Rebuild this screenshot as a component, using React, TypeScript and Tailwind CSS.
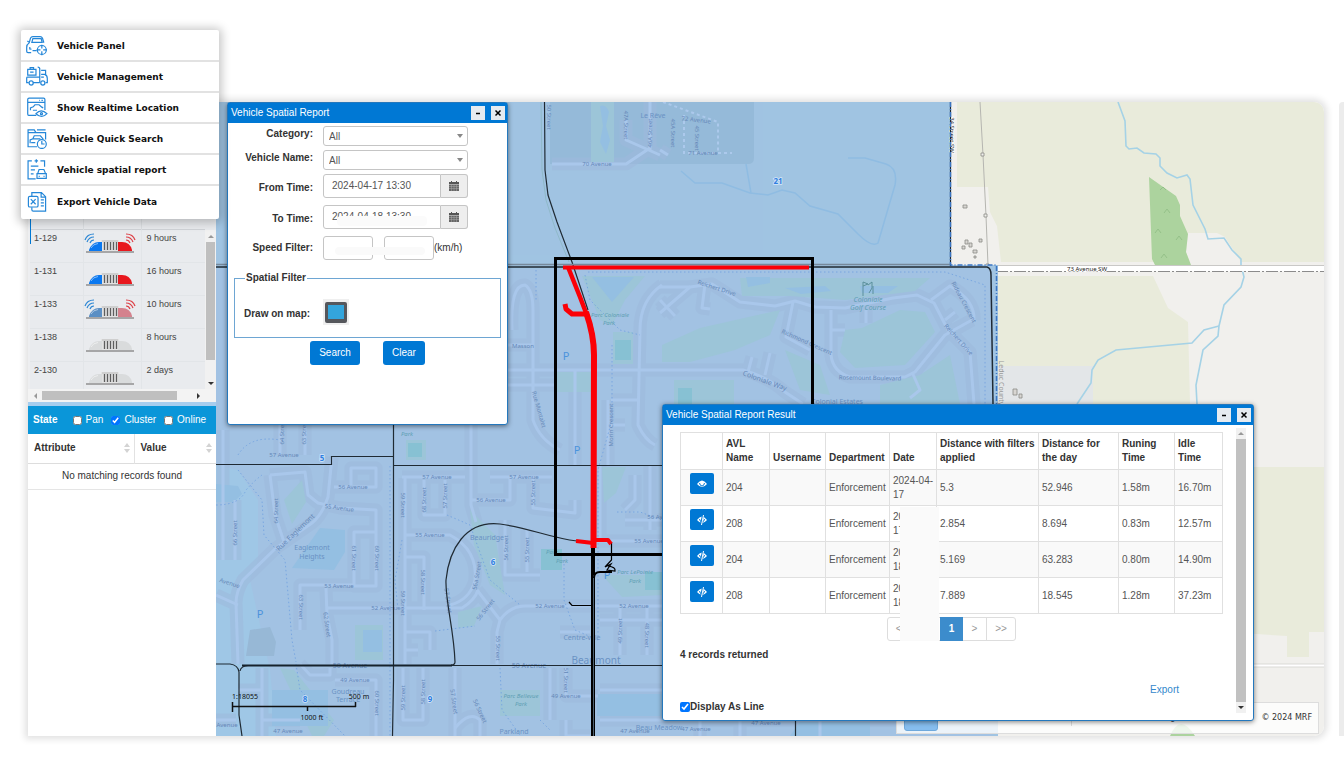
import { Fragment, type ReactNode } from "react";

const menuItems = [
  {
    label: "Vehicle Panel",
    icon: (
      <>
        <path d="M9 23l4-14q2-5 7-5h21q5 0 7 5l4 13M17 21l3-11h24l3 11zM9 23q-7 4-7 13v11q0 4 4 4h9M4 17l4 3" />
        <path d="M19 45h12M11 34v6l5 1" />
        <circle cx="46" cy="43" r="13" />
        <path d="M46 28v11M46 47v11M31 43h11M50 43h11" />
      </>
    ),
  },
  {
    label: "Vehicle Management",
    icon: (
      <>
        <path d="M5 9h24v17H5zM12 9V4h10v5M12 17h10M2 32h38M2 32v16h6M20 48h20M40 6v42M34 3q6 0 6 6" />
        <path d="M44 12h13v12H44M44 24h10q8 2 8 12v12h-5M44 32h8" />
        <circle cx="15" cy="49" r="6" />
        <circle cx="49" cy="49" r="6" />
      </>
    ),
  },
  {
    label: "Show Realtime Location",
    icon: (
      <>
        <path d="M30 53H8q-3 0-3-4V7q0-4 4-4h42q4 0 4 4v30M5 15h50M38 9h2M45 9h4" />
        <path d="M13 38v-7l8-3 5-6h12l8 7 4 2M20 38h12" />
        <path d="M29 48q15-16 32 0q-15 16-32 0z" />
        <circle cx="45" cy="48" r="3" />
      </>
    ),
  },
  {
    label: "Vehicle Quick Search",
    icon: (
      <>
        <path d="M32 54H6V5h18l5 8h28v20M32 5h25M6 13h23" />
        <path d="M12 44V34l8-3 4-9h18l8 10M20 31h22M15 42h12" />
        <circle cx="46" cy="46" r="13" />
        <path d="M46 37v9h8" />
      </>
    ),
  },
  {
    label: "Vehicle spatial report",
    icon: (
      <>
        <path d="M17 5H6v52h22M42 5h12v17M25 5h10M30 0v10M14 20h22M14 31h12M14 43h8" />
        <path d="M34 42l4-12h14l5 12M32 42h27v14H32zM37 50h3M51 50h3" />
      </>
    ),
  },
  {
    label: "Export Vehicle Data",
    icon: (
      <>
        <path d="M17 14V4h28l12 12v42H21q-4 0-4-4v-7M44 4v13h13M43 25h9M43 34h9M43 43h9" />
        <rect x="7" y="15" width="28" height="31" rx="4" />
        <path d="M14 23l14 15M28 23L14 38" />
      </>
    ),
  },
];

const units = [
  { name: "1-129", time: "9 hours", left: "#0a78f0", right: "#e8171d", waves: true },
  { name: "1-131", time: "16 hours", left: "#0a78f0", right: "#e8171d", waves: false },
  { name: "1-133", time: "10 hours", left: "#5b8fc4", right: "#d4828d", waves: true },
  { name: "1-138", time: "8 hours", left: "#d9dbdc", right: "#d9dbdc", waves: false },
  { name: "2-130", time: "2 days", left: "#d9dbdc", right: "#d9dbdc", waves: false },
];

const results = [
  { name: "204", date: ["2024-04-", "17"], filtered: "5.3", day: "52.946", run: "1.58m", idle: "16.70m", shown: true },
  { name: "208", date: ["2024-04-", "17"], filtered: "2.854", day: "8.694", run: "0.83m", idle: "12.57m", shown: false },
  { name: "204", date: ["2024-04-", "18"], filtered: "5.169", day: "63.283", run: "0.80m", idle: "14.90m", shown: false },
  { name: "208", date: ["2024-04-", "18"], filtered: "7.889", day: "18.545", run: "1.28m", idle: "37.23m", shown: false },
];

const columns = [
  ["w-[42px]", "", ""],
  ["w-[47px]", "AVL", "Name"],
  ["w-[56px]", "", "Username"],
  ["w-[64px]", "", "Department"],
  ["w-[47px]", "", "Date"],
  ["w-[102px]", "Distance with filters", "applied"],
  ["w-[80px]", "Distance for", "the day"],
  ["w-[56px]", "Runing", "Time"],
  ["w-[48px]", "Idle", "Time"],
];

const roads = [
  "M332 457L328 497Q322 515 312 523L276 548L243 580Q236 592 236 603L238 664",
  "M334 487H376V468H351V485",
  "M270 475L305 472L308 495L318 503L340 508L376 510V586H354V532H376",
  "M300 630V585H354",
  "M326 588L327 615L332 640V664",
  "M327 608H462Q475 600 478 590",
  "M270 475L275 515L285 545",
  "M402 477H465M471 425V505L476 522",
  "M405 478V664",
  "M424 480V515H445V480",
  "M490 477H552M533 477V508L575 513V500",
  "M472 500H510V477",
  "M404 535H450Q478 550 475 580Q470 600 450 605",
  "M405 557H424V610",
  "M405 632H430V650M405 650H418",
  "M505 520V575H540M527 530V572",
  "M477 590L500 620L497 632V664M500 620Q510 606 525 606H662",
  "M598 541H662",
  "M620 608V655M647 608V655",
  "M300 664L310 675H330V668",
  "M335 680H376V736M403 668V720H423V668M455 668V736M262 668V736M238 690H262",
  "M455 728Q470 710 480 720V736",
  "M550 668V720M566 668V696H598M566 720V736H590",
  "M508 370H743Q770 378 785 392L803 404",
  "M508 385H555M575 370V465",
  "M512 330Q510 285 525 285Q533 290 533 310V420Q540 440 560 450",
  "M508 345H533",
  "M662 285Q640 300 640 330L638 425Q645 440 655 445",
  "M608 400V465M611 400H640M611 425H625",
  "M660 313L690 287L712 284L740 302L775 306L795 301L815 307L845 308L893 298L917 295L934 303L948 330L970 352L974 404",
  "M705 284L702 308L710 309",
  "M660 287H690M660 300L675 316",
  "M793 302L786 337L810 350M770 353L765 375M748 372L752 357",
  "M831 310V355Q833 372 850 377H905L915 372L945 335L972 320",
  "M931 300L950 286Q975 300 974 320M945 320L955 312",
  "M866 310V323M831 330H845M912 372L920 390L910 398",
  "M626 120V140L660 155M650 102V150M660 150L668 155",
  "M552 164H626L650 148",
  "M223 430V560M235 500V560",
  "M216 595L238 605M280 425V455M305 425V455",
  "M216 720H236M262 720H300",
  "M600 465V540M635 475V500L625 510M650 465V530M662 520H625",
  "M560 632H590M600 620H662M600 690H662M600 720H900M700 720V736M740 720V736M820 720V736",
];

const parks = [
  "M591 102h23v60h-23z",
  "M662 345L700 328L780 310L770 335L735 350L690 362H662z",
  "M740 278H930L915 291L845 300L790 296L742 296z",
  "M845 330L862 328L900 310L925 312L935 332L905 365L855 368L840 352z",
  "M582 276H645L625 300L612 325L600 320z",
  "M613 332h20v32h-20z",
  "M406 440h20v20h-20z",
  "M284 500l18 -20l4 22l-14 22z",
  "M355 625h28v35h-28z",
  "M602 467h24l-10 26l-12 10z",
  "M602 575h60v20l-40 2z",
  "M470 510l25 25l10 60l-15 -10l-16 -40z",
  "M458 612l24 -6l-8 20l-16 2z",
  "M555 372h40v20h-40z",
  "M500 690h40v26h-40zM280 668l14 2l40 50l-10 16h-12z",
  "M785 350l35 15l10 30l-30 -5zM880 385l40 -10l30 -20l10 49h-80z",
  "M674 380h60v24h-60z",
];

const ponds = [
  "M592 277H634L612 302z",
  "M746 277l24 0l0 6l-22 4zM785 288l40 -2l6 5l-30 3zM860 286l38 0l-10 7h-26z",
  "M292 568L320 528L345 530V552L334 570z",
  "M363 630h19v22h-19z",
  "M216 484l22 2l4 8l-8 8h-18z",
  "M600 106q6 -2 9 6l-3 14l4 14l-4 14l-6 -12l3 -16z",
  "M272 690h56v36h-56zM597 694h65v22h-65z",
  "M800 722h70v14h-80z",
];

const teal = ["M615 340h16v20h-16z", "M408 443h14v14h-14z", "M541 549h21v21h-21z", "M645 572h17v18h-17z", "M678 388h14v16h-14z"];

const trails = [
  "M588 272H945L985 285V404",
  "M390 466V736M536 270V300",
  "M612 345V420L598 470V640",
  "M238 470L262 500L264 535L285 560L292 640L296 662",
  "M447 515L470 525L490 580L520 605",
  "M402 540L395 580L398 610M435 631L475 626",
  "M585 275L590 300L620 330L640 335",
  "M216 505Q240 505 246 490Q255 480 262 475",
  "M564 560V600L575 630L598 640",
  "M500 668L502 710L520 735M540 720L550 730",
  "M238 455Q250 435 280 440",
  "M617 512H640L662 520",
  "M296 664L300 690L345 736",
];

// text, x, y, rotation, size
type Label = [string, number, number, number?, number?];

const streetLabels: Label[] = [
  ["57 Avenue", 284, 457], ["56 Avenue", 353, 489], ["55 Avenue", 339, 510, 8], ["Rue Eaglemont", 297, 534, -44, 7],
  ["Avenue", 229, 585, 18], ["53 Avenue", 339, 588], ["52 Avenue", 386, 610], ["57 Avenue", 437, 479],
  ["57 Avenue", 524, 479], ["56 Avenue", 491, 502], ["55 Avenue", 430, 537], ["55 Avenue", 649, 543],
  ["56 Avenue", 662, 519], ["52 Avenue", 550, 608], ["52 Avenue", 634, 608], ["50 Avenue", 350, 668, 0, 7],
  ["50 Avenue", 529, 668, 0, 7], ["49 Avenue", 355, 682], ["49 Avenue", 566, 698], ["47 Avenue", 288, 733],
  ["47 Avenue", 635, 733], ["47 Avenue", 696, 731], ["47 Avenue", 766, 725], ["Avenue", 227, 727],
  ["68 Street", 426, 500, -90], ["57 Street", 447, 496, -90], ["59 Street", 401, 505, 90], ["66 Street", 237, 533, -90],
  ["64 Street", 278, 511, -90], ["61 Street", 352, 558, 90], ["60 Street", 375, 558, 90], ["58 Street", 421, 582, 90],
  ["56 Street", 508, 548, -90], ["55 Street", 529, 550, -90], ["55 Street", 535, 493, -90], ["56a Street", 479, 576, -80],
  ["57 Street", 446, 601, 82], ["56 Street", 487, 611, -52], ["63 Street", 299, 607, 90], ["62 Street", 325, 625, 82],
  ["59 Street", 401, 603, 90], ["55 Street", 496, 648, 90], ["49 Street", 622, 631, -90], ["48 Street", 645, 635, 90],
  ["60 Street", 375, 703, 90], ["59 Street", 405, 698, -90], ["58 Street", 425, 692, -90], ["57 Street", 452, 702, 82],
  ["51 Street", 564, 680, 90], ["56 Street", 478, 712, 65], ["64 Street", 284, 432, -90], ["63 Street", 306, 432, -90],
  ["50 Street", 547, 117, 90], ["70 Avenue", 597, 166], ["47A Street", 624, 125, 90], ["46A Street", 652, 133, -90],
  ["72 Avenue", 696, 122, 6], ["71 Avenue", 703, 155], ["45A Street", 671, 133, 90], ["45 Street", 695, 138, 90],
  ["Masson", 523, 348], ["Rue Montalet", 537, 410, 74], ["Morin Crescent", 613, 425, -90],
  ["Reichert Drive", 716, 290, 18], ["Richmond Crescent", 806, 344, 24], ["Coloniale Way", 764, 383, 20, 7],
  ["Rosemount Boulevard", 870, 380, 1], ["Rideau Crescent", 962, 303, 62], ["Reichert Drive", 957, 341, 48],
];

const placeLabels: Label[] = [
  ["Eaglemont", 312, 550, 0, 7], ["Heights", 312, 559, 0, 7], ["Beauridge", 487, 540, 0, 7], ["Centre-ville", 582, 640, 0, 7],
  ["Beaumont", 596, 664, 0, 10], ["Goudreau", 348, 694, 0, 7], ["Terrace", 348, 702, 0, 7], ["Parkland", 514, 734, 0, 7],
  ["Beau Meadow", 659, 730, 0, 7], ["Le Rêve", 653, 118, 0, 7], ["Colonial Estates", 837, 404, 0, 7],
];

const parkLabels: Label[] = [
  ["Coloniale", 868, 302, 0, 7], ["Golf Course", 868, 310, 0, 7], ["Parc Coloniale", 610, 317], ["Park", 609, 325],
  ["Parc LePointe", 635, 574], ["Park", 635, 583], ["Parc Bellevue", 521, 698], ["Park", 521, 706], ["Park", 407, 436],
  ["Parc", 552, 554], ["Park", 562, 563],
];

const zoneLabels: Label[] = [["21", 778, 184], ["5", 322, 461], ["6", 493, 565], ["8", 305, 702], ["9", 430, 702]];
const parking: Label[] = [["P", 566, 360], ["P", 577, 454], ["P", 607, 579], ["P", 260, 618]];

function Labels({ items, size = 6 }: { items: Label[]; size?: number }) {
  return (
    <>
      {items.map(([text, x, y, rot = 0, s], i) => (
        <text key={i} x={x} y={y} fontSize={s ?? size} textAnchor="middle" transform={`rotate(${rot} ${x} ${y})`}>
          {text}
        </text>
      ))}
    </>
  );
}

function CityMap() {
  return (
    <svg
      viewBox="216 102 1108 634"
      preserveAspectRatio="xMinYMin slice"
      className="block h-full w-full font-['Noto_Sans',sans-serif]"
    >
      <rect x="216" y="102" width="1108" height="634" fill="#f1f0ed" />

      {/* farmland east of town */}
      <g fill="#e9ebdb">
        <path d="M957 102H1324V262H1241L1225 237L1217 233H1188L1186 252L1190 262H1001L997 226L990 212L988 187H957z" />
        <path d="M998 276H1153L1168 308L1188 322L1190 404H998z" />
        <path d="M1240 467H1324V632H1309V657H1287V636L1240 633z" />
      </g>
      <path d="M998 366H1093V404H998z" fill="#e3e6e8" />
      <path d="M1149 177L1176 196L1180 205V216L1188 234L1186 252L1191 265H1155L1152 259z" fill="#acd39e" />
      <path d="M1170 736q10 -24 25 0z" fill="#acd39e" />
      <g fill="none" stroke="#94c089" strokeWidth="1">
        <path d="M1164 213l3-4l3 4M1155 233l3-4l3 4M1176 240l3-4l3 4M1161 258l3-4l3 4M1160 190l3-3l3 3" />
      </g>
      <g fill="none" stroke="#a5d2e6" strokeWidth="1.6">
        <path d="M1118 102L1125 121L1126 146L1129 149L1137 148L1144 153L1156 154L1160 158V166L1167 173L1177 178L1187 175L1190 179L1193 205L1205 229L1208 239L1224 238L1232 250L1241 259V265L1244 277L1241 287L1224 305L1219 326L1218 336L1203 350L1196 385L1197 404" />
        <path d="M1219 326L1204 330L1192 343L1116 350L1098 360L1092 370L1091 383L1077 404" />
      </g>
      <path d="M950 268.500H1324" stroke="#fff" strokeWidth="6" />
      <path d="M950 265.500H1324" stroke="#c9c8c6" />
      <path d="M996 271.500H1324" stroke="#8b8b8b" strokeDasharray="12 2 2 2" />
      <path d="M1240 665.500H1324" stroke="#dad9d6" strokeWidth="4" />
      <path d="M1240 665.500H1324" stroke="#fff" strokeWidth="2" />
      <path d="M980 102L983 155L986 216L988 265" fill="none" stroke="#b5b5b0" />
      <g fill="#f1f0ed" stroke="#8a8a86" strokeWidth="0.8">
        <path d="M981 153h3v3h-3zM984 214h3v3h-3zM986 264h3v3h-3z" />
        <path d="M963 205h4v3h-4zM965 240h3v4h-3zM969 243h3v4h-3zM979 239h3v3h-3zM973 250h4v3h-4zM962 246h3v3h-3zM974 256h2v2h-2zM1013 389h4v6h-4zM1019 394h3v4h-3z" fill="#d8d6d2" />
      </g>

      {/* town */}
      <path d="M216 102H950V265H998V736H216z" fill="#a0c4e2" />
      <path d="M508 269H992V736H216V269z" fill="#a2c2e3" />
      <path d="M216 465l22 5l20 30v60l-8 20l20 90l6 66h-60z" fill="#9fc7e6" />
      <path d="M550 102H754V158Q754 164 748 164H550z" fill="#96bad9" />
      <g fill="none" stroke="#9eb9dc" strokeWidth="13" strokeLinejoin="round" opacity="0.55">
        {roads.map((d) => (
          <path key={d} d={d} />
        ))}
      </g>
      <g fill="#9cc5d8">
        {parks.map((d) => (
          <path key={d} d={d} />
        ))}
      </g>
      <g fill="#94bfe2">
        {ponds.map((d) => (
          <path key={d} d={d} />
        ))}
      </g>
      <g fill="#87c1d3">
        {teal.map((d) => (
          <path key={d} d={d} />
        ))}
      </g>
      <path d="M250 630l20-3l6 15l-2 14h-28z" fill="#97b8d6" />
      <g fill="none" stroke="#a9c7eb" strokeWidth="3" strokeLinejoin="round">
        {roads.map((d) => (
          <path key={d} d={d} />
        ))}
      </g>
      <g fill="none" stroke="#6f9fe0" strokeWidth="0.8" strokeDasharray="1.500 2.500">
        {trails.map((d) => (
          <path key={d} d={d} />
        ))}
      </g>
      <path d="M663 102L718 122V153M684 115V153H732" fill="none" stroke="#acc9ec" strokeWidth="2" strokeDasharray="3 3" />
      <g fill="none" stroke="#8fbce2" strokeWidth="1.500">
        <path d="M681 171L695 183L722 183L750 193L768 195L782 190L795 193L810 206L838 214L858 234Q872 248 878 243L895 185Q898 168 886 164L865 158L848 158" />
        <path d="M746 164L751 193" />
      </g>
      <g fill="none" stroke="#5a8f9c">
        <path d="M863 296v-14l5 2l-5 2M868 285l4-3v6l-3 5M873 286v8" />
      </g>

      <g fill="#6588b8">
        <Labels items={streetLabels} />
      </g>
      <g fill="#6a92c4">
        <Labels items={placeLabels} />
      </g>
      <g fill="#609fb4" fontStyle="italic">
        <Labels items={parkLabels} />
      </g>
      <g fill="#4c93dc">
        <Labels items={parking} size={11} />
      </g>
      <g fill="#2f7fe0" stroke="#d5e6fa" strokeWidth="1.500" paintOrder="stroke" fontWeight="bold">
        <Labels items={zoneLabels} size={8} />
      </g>
      <g fill="#222" stroke="#fff" strokeWidth="1.500" paintOrder="stroke">
        <Labels items={[["73 Avenue SW", 1087, 271, 0, 6], ["34 Street SW", 950, 135, 90, 6]]} />
      </g>
      <g fill="#999">
        <Labels items={[["Leduc County", 999, 383, 90, 7]]} />
      </g>

      {/* zone boundaries */}
      <g fill="none" stroke="#1f2a33" strokeWidth="1.200">
        <path d="M216 464.500H331.500V456.500H393" />
        <path d="M393.500 425V680L392.500 736M393 465.500H662" />
        <path d="M216 664H230Q238 665 239 672V715L242 736M240 671Q241 666 248 665.500H998" />
        <path d="M950.500 102V266" />
        <path d="M216 267H950M950 267H987Q991 268 991 275L993 404" strokeWidth="1.500" />
        <path d="M544.500 102L545 170L548 195L557 222L572 262L588 310" />
        <path d="M577 541C550 538 530 528 500 524C465 520 449 550 446 580C445 600 454 630 455 662Q455 665 451 665" />
        <path d="M795.500 720V736" />
      </g>
      <path d="M216 264.500H950" stroke="#76899b" strokeWidth="1.500" />
      <path d="M541 102L542 170L546 200L555 228L569 262" fill="none" stroke="#8fb9c9" strokeWidth="1" />
      <path d="M950.500 102V265H996.500V404" fill="none" stroke="#3b75c4" strokeWidth="1.500" strokeDasharray="5 2 1 2" />
      <path d="M242 665.500H452" stroke="#16222c" strokeWidth="2" />
      <g fill="none" stroke="#000">
        <path d="M593 545V736" strokeWidth="4" />
        <path d="M593.500 575V736" stroke="#62788c" strokeWidth="0.800" />
        <path d="M594 578Q594 572 600 572H612" strokeWidth="2" />
        <path d="M611.500 542V560L605 567L611 564L607 570L615 571Q616 567 608 566M593 605.500H572L569 602" strokeWidth="1.200" />
        <path d="M662 554.500H555.500V258.500H812.500V404" strokeWidth="3" />
      </g>
      <g fill="none" stroke="#fb0007" strokeLinejoin="round">
        <path d="M563 267.500H809" strokeWidth="4" />
        <path d="M568 267L580 297L588 318Q594 335 594 355" strokeWidth="4.500" />
        <path d="M586 312Q594 335 594 355L593.500 548" strokeWidth="6" />
        <path d="M565 304L566 309L572 314L588 314" strokeWidth="5" />
        <path d="M576 541L593 543M593 540H608L611 544" strokeWidth="4" />
      </g>

      {/* scale bar */}
      <path d="M232.500 702V712M232 706.500H356M355.500 702V707M307.500 706V711" stroke="#111" strokeWidth="1.500" />
      <g fill="#111">
        <Labels items={[["1:18055", 245, 699], ["500 m", 359, 699], ["1000 ft", 312, 720]]} size={7} />
      </g>
    </svg>
  );
}

function LightBar({ left, right, waves }: { left: string; right: string; waves: boolean }) {
  return (
    <svg viewBox="0 0 52 24" className="h-6 w-[52px]">
      {waves && (
        <g fill="none" strokeWidth="1.200">
          <path d="M1 7Q3 1 10 1M3 9Q5 4 10 4M6 10Q7 7 10 7" stroke="#2b86d4" />
          <path d="M51 7Q49 1 42 1M49 9Q47 4 42 4M46 10Q45 7 42 7" stroke="#dd3d44" />
        </g>
      )}
      <path d="M17 7h18v11H17z" fill="#e3e3e3" />
      <path d="M18 7h16v2H18z" fill="#cfcfcf" />
      <path d="M5 17Q8 9 15 9H18V18H5z" fill={left} />
      <path d="M34 9H38Q46 9 48 17V18H34z" fill={right} />
      <path d="M7 15Q9 11 14 10.500" stroke="#fff" strokeOpacity="0.500" fill="none" />
      <path d="M20.500 9v8M23.500 9v8M26.500 9v8M29.500 9v8M32.500 9v8" stroke="#5e5e5e" strokeWidth="1.300" />
      <path d="M2 19h48" stroke="#8f8f8f" strokeWidth="1.500" />
    </svg>
  );
}

function CalendarIcon() {
  return (
    <svg viewBox="0 0 10 10" className="size-2.5" fill="#555">
      <path d="M0 1h2V0h1v1h4V0h1v1h2v2H0z" />
      <path d="M0 3.500h10V10H0z" fill="#666" />
      <path d="M0 5.500h10M0 7.500h10M2.500 3.500V10M5 3.500V10M7.500 3.500V10" stroke="#aaa" strokeWidth="0.500" />
    </svg>
  );
}

function EyeIcon({ slashed }: { slashed: boolean }) {
  return (
    <svg viewBox="0 0 12 10" className="h-2.5 w-3" fill="none">
      <path d="M1 5Q6-2 11 5Q6 11 1 5z" fill="#fff" />
      <path d="M3.500 4Q4 7 6 7Q8 7 8.500 4" stroke="#0078d4" />
      {slashed && <path d="M7 0L5 10" stroke="#0078d4" strokeWidth="2" />}
      {slashed && <path d="M7.500 0L5.500 10" stroke="#fff" />}
    </svg>
  );
}

function WindowFrame({ title, className, children }: { title: string; className: string; children: ReactNode }) {
  return (
    <section className={`absolute flex flex-col rounded-[3px] border border-[#2478bd] bg-white shadow-[0_1px_5px_rgba(0,0,0,0.5)] ${className}`}>
      <header className="flex h-5 shrink-0 items-center gap-1.5 bg-[#0078d4] pr-0.5 pl-[3px] text-white">
        <h2 className="flex-1">{title}</h2>
        {["Minimize", "Close"].map((action) => (
          <button key={action} type="button" aria-label={action} className="bg-[#e6ebf0] text-black">
            <svg viewBox="0 0 14 14" className="size-3.5" fill="none" stroke="currentColor" strokeWidth="1.500">
              <path d={action === "Minimize" ? "M5 7.500h4" : "M4.500 4.500l5 5M9.500 4.500l-5 5"} />
            </svg>
          </button>
        ))}
      </header>
      {children}
    </section>
  );
}

function SidePanel() {
  return (
    <aside className="flex w-[188px] shrink-0 flex-col bg-white">
      <div className="relative flex h-[287px] items-start overflow-hidden border-l-2 border-[#edeef0] bg-[#e9ebee] pt-[112px]">
        <span className="absolute top-[112px] -left-0.5 h-[30px] w-[3px] bg-[#0078d4]" />
        <table className="w-[175px] table-fixed border-collapse">
          <thead>
            <tr className="h-[15px] border-b border-[#d0d3d7]">
              <th className="w-[53px]" />
              <th className="w-[58px] border-x border-[#dcdfe2]" />
              <th />
            </tr>
          </thead>
          <tbody>
            {units.map((unit) => (
              <tr key={unit.name} className="h-[33px] border-b border-[#e2e5e8] align-top text-[9px] leading-4 text-[#444]">
                <td className="pl-1">{unit.name}</td>
                <td className="border-x border-[#e2e5e8] pt-[3px]">
                  <LightBar left={unit.left} right={unit.right} waves={unit.waves} />
                </td>
                <td className="pl-[5px]">{unit.time}</td>
              </tr>
            ))}
          </tbody>
        </table>
        <div className="mt-4 flex h-[159px] w-[11px] flex-col items-center bg-[#f1f1f1] pt-[5px] pb-1">
          <div className="size-0 border-x-[3px] border-b-[3px] border-x-transparent border-b-[#999]" />
          <div className="mt-1 h-[118px] w-[9px] bg-[#bfbfbf]" />
          <div className="mt-auto size-0 border-x-[3px] border-t-[3px] border-x-transparent border-t-[#333]" />
        </div>
      </div>
      <div className="flex h-[13px] items-center justify-between bg-[#f3f3f3] pr-4 pl-1.5">
        <div className="size-0 border-y-[3px] border-r-[3px] border-y-transparent border-r-[#999]" />
        <div className="mr-4 h-[9px] w-[135px] bg-[#bfbfbf]" />
        <div className="size-0 border-y-[3px] border-l-[3px] border-y-transparent border-l-[#333]" />
      </div>
      <div className="flex h-8 items-center border-t-4 border-[#a6cdee] bg-[#0a96d9] pl-[5px] text-white">
        <h2 className="flex-1 font-bold">State</h2>
        <div className="flex gap-2 pr-[10px]">
          {["Pan", "Cluster", "Online"].map((name) => (
            <label key={name} className="flex items-center gap-1">
              <input type="checkbox" defaultChecked={name === "Cluster"} className="size-[9px]" />
              {name}
            </label>
          ))}
        </div>
      </div>
      <table className="w-full table-fixed text-[#333]">
        <thead>
          <tr className="h-[29px] border-b border-[#ddd] text-left">
            {["Attribute", "Value"].map((name) => (
              <th key={name} className={name === "Attribute" ? "w-[106px] border-r border-[#e2e2e2] pr-1 pl-1.5" : "pr-1 pl-1.5"}>
                <span className="flex items-center justify-between">
                  {name}
                  <svg viewBox="0 0 6 10" className="h-2.5 w-1.5" fill="#d3d3d3">
                    <path d="M3 0l3 4H0zM3 10l3-4H0z" />
                  </svg>
                </span>
              </th>
            ))}
          </tr>
        </thead>
        <tbody>
          <tr className="h-[26px] border-b border-[#e5e5e5]">
            <td colSpan={2} className="text-center">
              No matching records found
            </td>
          </tr>
        </tbody>
      </table>
    </aside>
  );
}

const field = "rounded-[3px] border border-[#c5c5c5] bg-white text-[#555]";

function ReportForm() {
  return (
    <WindowFrame title="Vehicle Spatial Report" className="left-[11px] top-0 h-[323px] w-[281px]">
      <form className="flex flex-col pt-[3px] text-[#333]">
        {["Category", "Vehicle Name"].map((name) => (
          <div key={name} className="mb-1 flex gap-[10px]">
            <label htmlFor={name} className="w-[85px] text-right leading-4 font-bold">
              {name}:
            </label>
            <div className="relative">
              <select id={name} className={`h-5 w-[145px] appearance-none pt-0.5 pl-[5px] ${field} border-[#a8a8a8]`}>
                <option>All</option>
              </select>
              <span className="pointer-events-none absolute top-2 right-[5px] size-0 border-x-[3px] border-t-4 border-x-transparent border-t-[#888]" />
            </div>
          </div>
        ))}
        {[
          ["From Time", "2024-04-17 13:30"],
          ["To Time", "2024-04-18 13:30"],
        ].map(([name, value]) => (
          <div key={name} className="mb-[7px] flex gap-[10px]">
            <label htmlFor={name} className="w-[85px] pt-1.5 text-right leading-4 font-bold">
              {name}:
            </label>
            <div className="relative flex">
              <input id={name} defaultValue={value} className={`h-6 w-[118px] rounded-r-none px-2 pb-0.5 ${field}`} />
              {name === "To Time" && <span className="absolute top-[11px] left-3.5 h-2.5 w-[90px] rounded bg-[#fbfbfb]" />}
              <button
                type="button"
                aria-label={`Pick ${name}`}
                className="flex w-[27px] items-center justify-center rounded-r-[3px] border border-l-0 border-[#c5c5c5] bg-[#eee]"
              >
                <CalendarIcon />
              </button>
            </div>
          </div>
        ))}
        <div className="flex">
          <label htmlFor="speed-min" className="mr-[10px] w-[85px] pt-1 text-right leading-4 font-bold">
            Speed Filter:
          </label>
          <div className="relative flex items-center">
            <input id="speed-min" className={`h-6 w-[50px] ${field}`} />
            <span className="w-[11px]" />
            <input aria-label="Maximum speed" className={`h-6 w-[50px] ${field}`} />
            <span>(km/h)</span>
            <span className="absolute top-[11px] left-3 h-2 w-[90px] rounded bg-[#fafafa]" />
          </div>
        </div>

        <fieldset className="mx-1.5 mt-[10px] h-[68px] border border-[#6ea6d3]">
          <legend className="ml-[10px] px-px leading-4 font-bold">Spatial Filter</legend>
          <div className="flex items-center gap-[13px] pt-[13px] pl-[9px]">
            <span className="pt-1 font-bold">Draw on map:</span>
            <button type="button" aria-label="Draw rectangle" className="flex size-[26px] items-center justify-center bg-[#efefef]">
              <span className="block h-[21px] w-[22px] rounded-[2px] border-[3px] border-b-4 border-[#55575c] bg-[#33a5dc]" />
            </button>
          </div>
        </fieldset>

        <div className="mt-[3px] flex justify-center gap-[23px]">
          <button type="button" className="h-6 w-[50px] rounded-[3px] bg-[#0078d4] text-white">
            Search
          </button>
          <button type="button" className="h-6 w-[42px] rounded-[3px] bg-[#0078d4] text-white">
            Clear
          </button>
        </div>
      </form>
    </WindowFrame>
  );
}

function ReportResult() {
  return (
    <WindowFrame title="Vehicle Spatial Report Result" className="left-[446px] top-[302px] h-[317px] w-[592px]">
      <div className="flex flex-1 justify-between pr-[7px] pl-[17px] text-[#555]">
        <div className="relative flex flex-col pt-[7px]">
          <table className="w-[542px] table-fixed border-collapse leading-[14px]">
            <thead>
              <tr className="h-[37px]">
                {columns.map(([width, first, second], i) => (
                  <th key={i} className={`border border-[#e0e0e0] pb-1 pl-[3px] text-left align-bottom whitespace-nowrap text-[#333] ${width}`}>
                    {first}
                    {first && <br />}
                    {second}
                  </th>
                ))}
              </tr>
            </thead>
            <tbody>
              {results.map((row, i) => (
                <tr key={i} className="h-9 odd:bg-[#f9f9f9] [&>td]:border [&>td]:border-[#e0e0e0] [&>td]:pl-[3px]">
                  <td className="align-top">
                    <button
                      type="button"
                      aria-label={row.shown ? "Hide track" : "Show track"}
                      className="mt-[3px] ml-1.5 flex h-[21px] w-6 items-center justify-center rounded-[2px] bg-[#0078d4]"
                    >
                      <EyeIcon slashed={!row.shown} />
                    </button>
                  </td>
                  <td>{row.name}</td>
                  <td />
                  <td>Enforcement</td>
                  <td>
                    {row.date.map((part) => (
                      <Fragment key={part}>
                        {part}
                        <br />
                      </Fragment>
                    ))}
                  </td>
                  <td>{row.filtered}</td>
                  <td>{row.day}</td>
                  <td>{row.run}</td>
                  <td>{row.idle}</td>
                </tr>
              ))}
            </tbody>
          </table>
          <nav className="mt-[3px] flex h-6 self-center rounded-[3px] border border-[#ddd] text-[#999]">
            <button type="button" className="w-7 border-r border-[#ddd]">&lt;&lt;</button>
            <button type="button" className="w-6">&lt;</button>
            <button type="button" className="-my-px w-[23px] bg-[#3c8ccc] font-bold text-white">1</button>
            <button type="button" className="w-6 border-r border-[#ddd]">&gt;</button>
            <button type="button" className="w-7">&gt;&gt;</button>
          </nav>
          <div className="absolute top-[82px] left-[220px] h-[134px] w-[39px] bg-[#fafafa]" />
          <p className="mt-[6px] leading-4 font-bold text-[#333]">4 records returned</p>
          <a href="#export" className="mt-[19px] mr-11 self-end leading-4 text-[#3388cc]">
            Export
          </a>
          <label className="mt-px flex items-center leading-4 font-bold text-[#333]">
            <input type="checkbox" defaultChecked className="size-2.5" />
            Display As Line
          </label>
        </div>
        <div className="mt-[3px] mb-[7px] flex w-2.5 flex-col items-center justify-between bg-[#f1f1f1] py-1">
          <div className="size-0 border-x-[3px] border-b-[3px] border-x-transparent border-b-[#999]" />
          <div className="my-1 w-2.5 flex-1 bg-[#c1c1c1]" />
          <div className="size-0 border-x-[3px] border-t-[3px] border-x-transparent border-t-[#333]" />
        </div>
      </div>
    </WindowFrame>
  );
}

export default function App() {
  return (
    <div className="flex min-h-screen bg-white pt-[102px] pb-[34px] font-['Liberation_Sans',Arial,sans-serif] text-[10px] leading-4">
      <main className="relative ml-7 flex min-h-[634px] flex-1 rounded-r-[10px] shadow-[0_0_7px_3px_rgba(0,0,0,0.12)]">
        <SidePanel />
        <div className="relative flex-1 overflow-hidden rounded-r-[10px]">
          <div className="absolute inset-0">
            <CityMap />
          </div>
          <footer className="absolute right-[5px] bottom-0.5 flex h-8 w-[423px] items-center border border-[#ddd] bg-white/80 pr-1.5 pl-[7px] font-['DejaVu_Sans',sans-serif] text-[8px] text-[#333]">
            <button type="button" className="h-[26px] w-[34px] rounded-[3px] border border-[#6fa9dc] bg-[#86bdee] text-[#2f6aa3]">
              GO
            </button>
            <span className="ml-1 w-[130px] border-r border-[#ddd]">Current Coordinates</span>
            <span className="w-[84px]">Lat: 53.365333</span>
            <span className="flex-1">Long: -113.387716</span>
            <span>© 2024 MRF</span>
          </footer>
          <ReportForm />
          <ReportResult />
        </div>

        <nav className="absolute top-[-72px] left-[-7px] w-[198px] rounded-[2px] bg-white pt-px pb-0.5 shadow-[0_1px_10px_3px_rgba(0,0,0,0.22)]">
          {menuItems.map((item) => (
            <a
              key={item.label}
              href="#menu"
              className="flex h-[31px] items-center gap-[9px] border-b-2 border-[#e2e2e2] pl-[5px] font-['DejaVu_Sans',sans-serif] text-[9px] font-bold text-[#111] last:border-0"
            >
              <svg viewBox="0 0 64 60" className="h-[21px] w-[22px]" fill="none" stroke="#2587d8" strokeWidth="3.500">
                {item.icon}
              </svg>
              {item.label}
            </a>
          ))}
        </nav>
      </main>
      <div className="ml-[15px] w-[5px] rounded-tl bg-[#ececec]" />
    </div>
  );
}
